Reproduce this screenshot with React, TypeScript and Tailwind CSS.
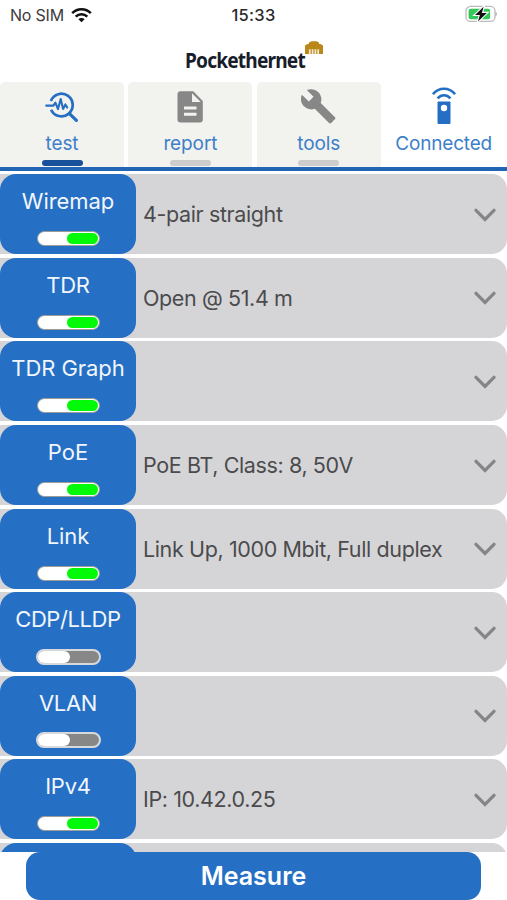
import React from "react";

const rows = [
  { name: "Wiremap", value: "4-pair straight", on: true, track: "tracking-[-0.05px]" },
  { name: "TDR", value: "Open @ 51.4 m", on: true, track: "tracking-[-0.3px]" },
  { name: "TDR Graph", value: "", on: true, track: "tracking-[-0.05px]" },
  { name: "PoE", value: "PoE BT, Class: 8, 50V", on: true, track: "tracking-normal" },
  { name: "Link", value: "Link Up, 1000 Mbit, Full duplex", on: true, track: "tracking-[-0.1px]" },
  { name: "CDP/LLDP", value: "", on: false, track: "tracking-[-0.4px]" },
  { name: "VLAN", value: "", on: false, track: "tracking-[-0.3px]" },
  { name: "IPv4", value: "IP: 10.42.0.25", on: true, track: "tracking-[-0.2px]" },
];

function StatusBar() {
  return (
    <div className="grid h-[30px] grid-cols-3 items-center text-[16px] leading-[30px]">
      <div className="flex items-center pl-[10px] text-[#3c3c3e]">
        <span className="text-[16px] tracking-[-0.2px]">No SIM</span>
        <svg className="ml-[7px] -mt-px" width="21" height="16" viewBox="0 0 21 16" fill="none" stroke="#111" strokeWidth="2.5">
          <path d="M1.2 6.2C6.3.8 14.7.8 19.8 6.2" />
          <path d="M4.7 9.7c3.2-3.3 8.4-3.3 11.6 0" />
          <path d="M7.4 12.2a4.4 4.4 0 0 1 6.2 0L10.5 15.2z" fill="#111" stroke="none" />
        </svg>
      </div>
      <div className="text-center text-[16.5px] font-medium tracking-[0.3px] text-[#29292b]">15:33</div>
      <div className="flex justify-end pr-[10px]">
        <svg className="-mt-[2px]" width="34" height="18" viewBox="0 0 34 18">
          <rect x="3" y="1.4" width="29" height="15" rx="4.5" fill="#fff" stroke="#bcbcbe" strokeWidth="1.3" />
          <path d="M32.6 6.8c1.6.8 1.6 3.6 0 4.4z" fill="#aaa" />
          <rect x="5.6" y="3.8" width="21.5" height="10.4" rx="2" fill="#35c95b" />
          <path d="M20.6 1.8 12 9.9h4.9L15 16.4l8.8-8.5h-4.9z" fill="#111" stroke="#fff" strokeWidth="2.2" paintOrder="stroke" />
        </svg>
      </div>
    </div>
  );
}

function Brand() {
  return (
    <div className="flex h-[52px] items-start pl-[185px]">
      <div className="w-[120px] pt-[15px]">
        <div className="origin-left scale-x-[0.91] whitespace-nowrap font-['Noto_Sans','Open_Sans',sans-serif] text-[21px] font-bold leading-[30px] tracking-[-0.9px] text-[#181d2b]">
          Pockethernet
        </div>
      </div>
      <svg className="mt-[11px]" width="18" height="13" viewBox="0 0 18 13">
        <path d="M0 13V4.4l2-1.2 2-.4V1.6L6.5.3h5L14 1.6v1.2l2 .4 2 1.2V13z" fill="#b98818" />
        <path d="M4.8 8.2V13M7.6 8.2V13M10.4 8.2V13M13.2 8.2V13" stroke="#f4ead3" strokeWidth="1.7" />
      </svg>
    </div>
  );
}

function TestIcon() {
  return (
    <svg width="34" height="32" viewBox="0 0 34 32" fill="none" stroke="#246fc4" strokeLinecap="round" strokeLinejoin="round">
      <path d="M5.9 9.9A11.3 11.3 0 1 1 6.1 18.7" strokeWidth="2.7" strokeLinecap="butt" />
      <path d="M24.4 22.6l7 6.8" strokeWidth="3.2" />
      <path d="M1.2 14.6h7.2l2-3 2.6 6.5 2.7-10 2.4 9.8 2.3-4.5 1.8 3.2" strokeWidth="2.1" />
    </svg>
  );
}

function ReportIcon() {
  return (
    <svg width="26" height="32" viewBox="0 0 26 32">
      <path d="M3.5.2h12.8L25.8 10v18.5a3 3 0 0 1-3 3H3.5a3 3 0 0 1-3-3V3.2a3 3 0 0 1 3-3z" fill="#878787" />
      <path d="M15 2.3V11h8.8zM7 15.6h12.5v3H7zM7 21.8h12.5v3H7z" fill="#f2f2ef" />
    </svg>
  );
}

function ToolsIcon() {
  return (
    <svg width="36" height="36" viewBox="1 1 23 23" fill="#878787">
      <path d="M22.7 19l-9.1-9.1c.9-2.3.4-5-1.5-6.9-2-2-5-2.4-7.4-1.3L9 6 6 9 1.6 4.7C.4 7.1.9 10.1 2.9 12.1c1.9 1.9 4.6 2.4 6.9 1.5l9.1 9.1c.4.4 1 .4 1.4 0l2.3-2.3c.5-.4.5-1.1.1-1.4z" />
    </svg>
  );
}

function DeviceIcon() {
  return (
    <svg width="24" height="38" viewBox="0 0 24 38" fill="none" stroke="#246fc4" strokeWidth="2.6">
      <path d="M.9 7.2C7-.1 17-.1 23.1 7.2" />
      <path d="M5.6 11.3c3.7-4 9.1-4 12.8 0" />
      <path d="M6.5 14.6h11a1 1 0 0 1 1 1v20.4a1 1 0 0 1-1 1h-11a1 1 0 0 1-1-1v-20.4a1 1 0 0 1 1-1z" fill="#246fc4" stroke="none" />
      <circle cx="12" cy="21" r="3.2" fill="#fff" stroke="none" />
    </svg>
  );
}

function Tab({ label, icon, bar }: { label: string; icon: React.ReactNode; bar: string }) {
  return (
    <div className="flex h-[85px] flex-col items-center rounded-t-[5px] bg-[#f2f2ef]">
      <div className="flex h-[50px] w-full items-center justify-center">{icon}</div>
      <div className="h-[28px] pt-[0.6px] text-[19px] leading-[22px] tracking-[-0.1px] text-[#3d7fc9]">{label}</div>
      <div className={"h-[6px] w-[41px] rounded-[3px] " + bar} />
    </div>
  );
}

function Toggle({ on }: { on: boolean }) {
  return on ? (
    <div className="flex h-[15px] w-[63px] justify-end rounded-full border border-[#9b9d96] bg-white p-px">
      <div className="h-full w-[31px] rounded-[6px] bg-[#00fa08]" />
    </div>
  ) : (
    <div className="flex h-[16px] w-[65px] rounded-full border-2 border-[#d7d9dc] bg-[#878787]">
      <div className="h-full w-[32px] rounded-[6px] bg-white" />
    </div>
  );
}

export default function App() {
  return (
    <div className="flex h-[900px] w-[507px] flex-col overflow-hidden bg-white font-['Inter','Liberation_Sans',sans-serif]">
      <StatusBar />
      <Brand />
      <div className="grid h-[89px] shrink-0 grid-cols-[124px_124px_124px_123px] items-start gap-x-[4.4px] border-b-4 border-[#2265b5]">
        <Tab label="test" icon={<TestIcon />} bar="bg-[#185199]" />
        <Tab label="report" icon={<ReportIcon />} bar="bg-[#cdcdcd]" />
        <Tab label="tools" icon={<ToolsIcon />} bar="bg-[#cdcdcd]" />
        <div className="flex flex-col items-center pr-[6px]">
          <div className="flex h-[50px] items-start pt-[5px]"><DeviceIcon /></div>
          <div className="pt-[0.6px] text-[19px] leading-[22px] tracking-[-0.2px] text-[#3d7fc9]">Connected</div>
        </div>
      </div>
      <div className="flex h-[681px] shrink-0 flex-col gap-[3.6px] overflow-hidden pt-[3.25px]">
        {rows.map((r) => (
          <div key={r.name} className="flex h-[80px] shrink-0 items-center rounded-r-[15px] bg-[#d5d5d7]">
            <div className="flex h-full w-[136px] shrink-0 flex-col items-center rounded-[16px] bg-[#256fc5]">
              <div className={"h-[56px] pt-[13px] text-[22px] leading-[28px] text-[#f1f6fc] " + r.track}>{r.name}</div>
              <div className="flex h-[17px] items-center"><Toggle on={r.on} /></div>
            </div>
            <div className="flex-1 whitespace-nowrap pl-[7px] text-[21.5px] leading-[28px] tracking-[-0.38px] text-[#4b4b4d]">{r.value}</div>
            <svg className="mr-[11px] mt-px shrink-0" width="22" height="14" viewBox="0 0 22 14" fill="none" stroke="#858587" strokeWidth="3.3" strokeLinecap="round">
              <path d="M2 2.3l9 9 9-9" />
            </svg>
          </div>
        ))}
        <div className="h-[80px] shrink-0 rounded-r-[15px] bg-[#d5d5d7]">
          <div className="h-full w-[136px] rounded-[16px] bg-[#256fc5]" />
        </div>
      </div>
      <button className="ml-[26px] h-[48px] w-[455px] shrink-0 rounded-[14px] bg-[#256fc5] pt-px text-[25px] font-semibold leading-[47px] text-white">
        Measure
      </button>
    </div>
  );
}
